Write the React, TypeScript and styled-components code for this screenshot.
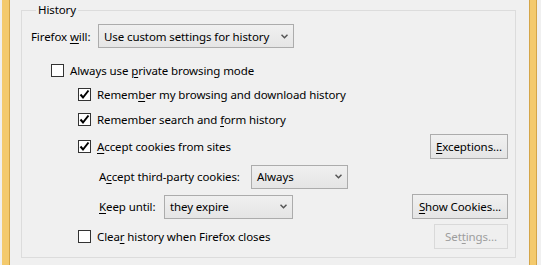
import React from "react";
import styled, { createGlobalStyle } from "styled-components";

const GlobalStyle = createGlobalStyle`
  html, body {
    margin: 0;
    padding: 0;
    background: #f0f0f0;
  }
  body {
    font-family: "Noto Sans", "Open Sans", sans-serif;
    font-size: 11.5px;
    letter-spacing: -0.1px;
    color: #000;
  }
  u {
    text-decoration: underline;
    text-underline-offset: 2px;
  }
`;

const Frame = styled.div`
  display: flex;
  height: 265px;
  width: 541px;
  padding-left: 2px;
  box-sizing: border-box;
  background: #f0f0f0;
`;

const YellowBar = styled.div<{ $side: "left" | "right" }>`
  width: 8px;
  box-sizing: border-box;
  background: #f4ca6d;
  border-right: 1px solid #d4a548;
  border-left: ${(p) => (p.$side === "right" ? "1px solid #d4a548" : "none")};
  margin-right: ${(p) => (p.$side === "right" ? "4px" : "0")};
  flex-shrink: 0;
`;

const Content = styled.div`
  flex: 1;
  padding: 2px 13px 0 11px;
`;

const Group = styled.fieldset`
  margin: 0;
  padding: 0 7px 8px 9px;
  border: 1px solid #dcdcdc;
  display: flex;
  flex-direction: column;
`;

const Legend = styled.legend`
  margin-left: 5px;
  padding: 0 2px;
  line-height: 16px;
`;

const Row = styled.div<{ $indent?: number; $top: number; $height?: number }>`
  display: flex;
  align-items: center;
  justify-content: space-between;
  height: ${(p) => p.$height ?? 25}px;
  margin-top: ${(p) => p.$top}px;
  padding-left: ${(p) => p.$indent ?? 0}px;
`;

const Left = styled.div`
  display: flex;
  align-items: center;
`;

const Label = styled.span<{ $width: number }>`
  width: ${(p) => p.$width}px;
  white-space: nowrap;
`;

const SelectBox = styled.div<{ $width: number }>`
  width: ${(p) => p.$width}px;
  height: 24px;
  box-sizing: border-box;
  border: 1px solid #acacac;
  background: linear-gradient(#f0f0f0, #e5e5e5);
  display: flex;
  align-items: center;
  justify-content: space-between;
  padding: 0 5px 0 5px;
  white-space: nowrap;
`;

const CheckLabel = styled.label`
  display: flex;
  align-items: center;
  gap: 6px;
  white-space: nowrap;
`;

const Box = styled.span`
  width: 13px;
  height: 13px;
  box-sizing: border-box;
  border: 1px solid #333;
  background: #fff;
  display: flex;
  align-items: center;
  justify-content: center;
`;

const Button = styled.div<{ $width: number; $disabled?: boolean }>`
  width: ${(p) => p.$width}px;
  height: 25px;
  box-sizing: border-box;
  border: 1px solid ${(p) => (p.$disabled ? "#d9d9d9" : "#acacac")};
  background: ${(p) =>
    p.$disabled ? "#efefef" : "linear-gradient(#f0f0f0, #e5e5e5)"};
  color: ${(p) => (p.$disabled ? "#9d9d9d" : "#000")};
  display: flex;
  align-items: center;
  justify-content: center;
  white-space: nowrap;
`;

const Chevron = () => (
  <svg width="7" height="5" viewBox="0 0 7 5">
    <polyline
      points="0.5,0.8 3.5,3.8 6.5,0.8"
      fill="none"
      stroke="#555"
      strokeWidth="1.5"
    />
  </svg>
);

const Checkbox = ({ checked }: { checked?: boolean }) => (
  <Box>
    {checked && (
      <svg width="11" height="11" viewBox="0 0 11 11">
        <polyline
          points="1.5,5.5 4,8.5 9.5,1.5"
          fill="none"
          stroke="#000"
          strokeWidth="2"
        />
      </svg>
    )}
  </Box>
);

const Select = ({ width, value }: { width: number; value: string }) => (
  <SelectBox $width={width}>
    <span>{value}</span>
    <Chevron />
  </SelectBox>
);

const App = () => {
  return (
    <>
      <GlobalStyle />
      <Frame>
        <YellowBar $side="left" />
        <Content>
          <Group>
            <Legend>History</Legend>
            <Row $top={6} $height={24}>
              <Left>
                <Label $width={67}>
                  Firefox <u>w</u>ill:
                </Label>
                <Select width={196} value="Use custom settings for history" />
              </Left>
            </Row>
            <Row $top={12} $height={20} $indent={20}>
              <CheckLabel>
                <Checkbox />
                <span>
                  Always use <u>p</u>rivate browsing mode
                </span>
              </CheckLabel>
            </Row>
            <Row $top={4} $height={20} $indent={47}>
              <CheckLabel>
                <Checkbox checked />
                <span>
                  Remem<u>b</u>er my browsing and download history
                </span>
              </CheckLabel>
            </Row>
            <Row $top={5} $height={20} $indent={47}>
              <CheckLabel>
                <Checkbox checked />
                <span>
                  Remember search and <u>f</u>orm history
                </span>
              </CheckLabel>
            </Row>
            <Row $top={5} $indent={47}>
              <CheckLabel>
                <Checkbox checked />
                <span>
                  <u>A</u>ccept cookies from sites
                </span>
              </CheckLabel>
              <Button $width={78}>
                <span>
                  <u>E</u>xceptions...
                </span>
              </Button>
            </Row>
            <Row $top={5} $indent={68}>
              <Left>
                <Label $width={152}>
                  A<u>c</u>cept third-party cookies:
                </Label>
                <Select width={97} value="Always" />
              </Left>
            </Row>
            <Row $top={5} $indent={68}>
              <Left>
                <Label $width={65}>
                  <u>K</u>eep until:
                </Label>
                <Select width={129} value="they expire" />
              </Left>
              <Button $width={96}>
                <span>
                  <u>S</u>how Cookies...
                </span>
              </Button>
            </Row>
            <Row $top={5} $indent={47}>
              <CheckLabel>
                <Checkbox />
                <span>
                  Clea<u>r</u> history when Firefox closes
                </span>
              </CheckLabel>
              <Button $width={74} $disabled>
                <span>
                  Set<u>t</u>ings...
                </span>
              </Button>
            </Row>
          </Group>
        </Content>
        <YellowBar $side="right" />
      </Frame>
    </>
  );
};

export default App;
